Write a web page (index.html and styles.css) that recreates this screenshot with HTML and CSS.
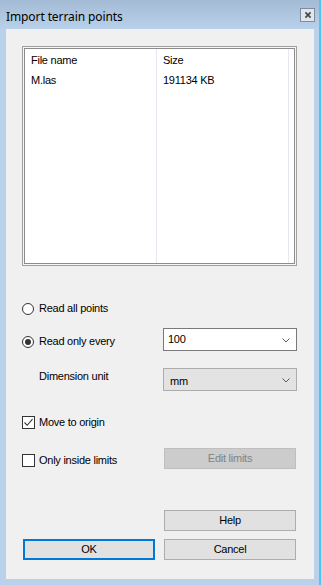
FILE: index.html
```html
<!DOCTYPE html>
<html>
<head>
<meta charset="utf-8">
<link rel="stylesheet" href="styles.css">
</head>
<body>
<div class="window">
  <div class="titlebar">
    <span class="title">Import terrain points</span>
    <span class="close">
      <svg width="14" height="14" viewBox="0 0 14 14"><path d="M4 4 L10 10 M10 4 L4 10" stroke="#4a4a4a" stroke-width="2" fill="none"/></svg>
    </span>
  </div>
  <div class="client">
    <div class="list">
      <div class="list-inner">
        <div class="col col-name">
          <div class="head">File name</div>
          <div class="cell">M.las</div>
        </div>
        <div class="col col-size">
          <div class="head">Size</div>
          <div class="cell">191134 KB</div>
        </div>
      </div>
    </div>

    <div class="row row-a">
      <span class="radio"></span>
      <span class="label">Read all points</span>
    </div>
    <div class="row row-b">
      <div class="lead">
        <span class="radio checked"></span>
        <span class="label">Read only every</span>
      </div>
      <div class="combo white">
        <span class="value">100</span>
        <svg class="chev" width="8" height="5" viewBox="0 0 8 5"><path d="M0.5 0.5 L4 4 L7.5 0.5" stroke="#5a5a5a" stroke-width="1" fill="none"/></svg>
      </div>
    </div>
    <div class="row row-c">
      <div class="lead">
        <span class="label indent">Dimension unit</span>
      </div>
      <div class="combo gray">
        <span class="value">mm</span>
        <svg class="chev" width="8" height="5" viewBox="0 0 8 5"><path d="M0.5 0.5 L4 4 L7.5 0.5" stroke="#5a5a5a" stroke-width="1" fill="none"/></svg>
      </div>
    </div>
    <div class="row row-d">
      <span class="check checked">
        <svg width="11" height="11" viewBox="0 0 11 11"><path d="M1.5 5.5 L4.2 8.3 L9.5 2.2" stroke="#333" stroke-width="1.1" fill="none"/></svg>
      </span>
      <span class="label">Move to origin</span>
    </div>
    <div class="row row-e">
      <div class="lead">
        <span class="check"></span>
        <span class="label">Only inside limits</span>
      </div>
      <div class="btn disabled">Edit limits</div>
    </div>
    <div class="row row-help">
      <div class="btn">Help</div>
    </div>
    <div class="row row-ok">
      <div class="btn default">OK</div>
      <div class="btn">Cancel</div>
    </div>
  </div>
</div>
</body>
</html>
```

FILE: styles.css
```css
html, body {
  margin: 0;
  padding: 0;
}
body {
  width: 321px;
  height: 585px;
  overflow: hidden;
  font-family: "Liberation Sans", Arial, sans-serif;
  font-size: 11px;
  letter-spacing: -0.25px;
  color: #000;
}
.window {
  width: 321px;
  height: 585px;
  box-sizing: border-box;
  border-right: 2px solid #4cc6f2;
  padding: 0 5px 6px 6px;
  background: linear-gradient(to bottom, #a3bbd5 0px, #b9d1ea 30px, #b9d1ea 100%);
  display: flex;
  flex-direction: column;
}
.titlebar {
  height: 29px;
  display: flex;
  align-items: flex-start;
}
.title {
  padding-top: 9px;
  font-family: "Noto Sans", "Liberation Sans", sans-serif;
  font-size: 12px;
  letter-spacing: -0.1px;
  line-height: 15px;
  color: #000;
}
.close {
  margin-left: auto;
  margin-top: 8px;
  margin-right: -1px;
  width: 15px;
  height: 14px;
  box-sizing: border-box;
  border: 1px solid #7f8c9d;
  background: #dfe6ee;
  display: flex;
  align-items: center;
  justify-content: center;
}
.close svg {
  width: 12px;
  height: 12px;
}
.client {
  width: 308px;
  height: 550px;
  box-sizing: border-box;
  background: #f0f0f0;
  padding-left: 16px;
  display: flex;
  flex-direction: column;
}
.list {
  margin-top: 17px;
  width: 275px;
  height: 220px;
  box-sizing: border-box;
  border: 1px solid #a0a0a0;
  padding: 1px;
  background: #f6f6f6;
  flex: none;
}
.list-inner {
  height: 100%;
  box-sizing: border-box;
  border: 1px solid #8c8c8c;
  background: #fff;
  display: flex;
}
.col {
  box-sizing: border-box;
  border-right: 1px solid #e4e9f1;
  height: 100%;
}
.col-name {
  width: 132px;
  padding-left: 6px;
}
.col-size {
  width: 132px;
  padding-left: 6px;
}
.head {
  height: 22px;
  box-sizing: border-box;
  padding-top: 5px;
  line-height: 13px;
}
.cell {
  height: 17px;
  box-sizing: border-box;
  padding-top: 3px;
  line-height: 13px;
}
.row {
  display: flex;
  align-items: flex-start;
  flex: none;
}
.lead {
  width: 141px;
  display: flex;
  align-items: flex-start;
  flex: none;
}
.label {
  line-height: 13px;
  white-space: nowrap;
}
.radio {
  width: 12px;
  height: 12px;
  box-sizing: border-box;
  border: 1px solid #333;
  border-radius: 50%;
  background: #fff;
  margin-right: 5px;
  flex: none;
  display: flex;
  align-items: center;
  justify-content: center;
}
.radio.checked::after {
  content: "";
  width: 6px;
  height: 6px;
  border-radius: 50%;
  background: #333;
}
.check {
  width: 13px;
  height: 13px;
  box-sizing: border-box;
  border: 1px solid #333;
  background: #fff;
  margin-right: 4px;
  flex: none;
  display: flex;
  align-items: center;
  justify-content: center;
}
.row-a {
  margin-top: 35px;
  height: 15px;
}
.row-a .radio { margin-top: 2px; }
.row-a .label { margin-top: 1px; }
.row-b {
  margin-top: 12px;
  height: 23px;
}
.row-b .radio { margin-top: 8px; }
.row-b .label { margin-top: 7px; }
.row-c {
  margin-top: 17px;
  height: 23px;
}
.indent {
  margin-left: 17px;
  margin-top: 2px;
}
.combo {
  width: 134px;
  height: 23px;
  box-sizing: border-box;
  display: flex;
  align-items: center;
  padding: 0 6px 0 4px;
}
.combo.white {
  background: #fff;
  border: 1px solid #7a7a7a;
}
.combo.gray {
  background: #e3e3e3;
  border: 1px solid #acacac;
}
.combo.gray .value {
  margin-top: 3px;
  padding-left: 2px;
}
.combo .value {
  line-height: 13px;
}
.chev {
  margin-left: auto;
  margin-top: 1px;
}
.row-d {
  margin-top: 23px;
  height: 17px;
}
.row-d .check { margin-top: 2px; }
.row-d .label { margin-top: 2px; }
.row-e {
  margin-top: 17px;
  height: 21px;
}
.row-e .check { margin-top: 6px; }
.row-e .label { margin-top: 6px; }
.btn {
  width: 132px;
  height: 21px;
  box-sizing: border-box;
  border: 1px solid #adadad;
  background: #e1e1e1;
  display: flex;
  align-items: center;
  justify-content: center;
  line-height: 13px;
  margin-left: 1px;
  flex: none;
}
.btn.disabled {
  background: #cccccc;
  border-color: #bfbfbf;
  color: #838383;
}
.row-help {
  margin-top: 41px;
  padding-left: 141px;
}
.row-ok {
  margin-top: 8px;
}
.btn.default {
  border: 2px solid #0078d7;
  margin-left: 1px;
  margin-right: 8px;
}
```
